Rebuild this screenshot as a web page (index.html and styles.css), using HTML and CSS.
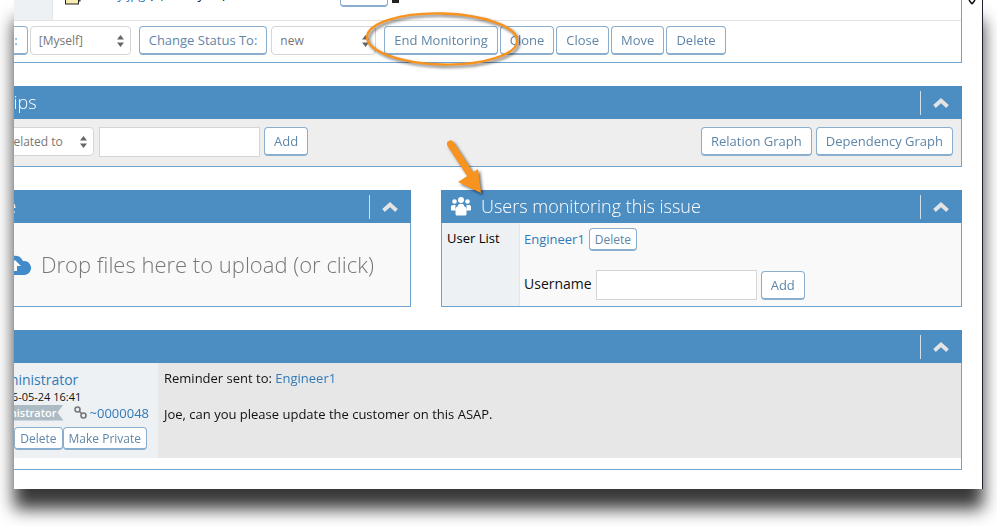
FILE: index.html
```html
<!DOCTYPE html>
<html lang="en">
<head>
  <meta charset="UTF-8">
  <title>View Issue</title>
  <link rel="stylesheet" href="styles.css">
</head>
<body>
  <div class="shot">
    <div class="content">

      <section class="widget">
        <div class="file-row">
          <div class="file-label"></div>
          <div class="file-info">
            <svg class="file-icon" width="16" height="14" viewBox="0 0 16 14"><rect x="3" y="0" width="12" height="10" fill="#e8d84a" stroke="#222"/><rect x="0.5" y="4" width="13" height="9" fill="#f4ecb0" stroke="#222"/></svg>
            <a href="#">Bobby.jpg</a>
            <span class="file-size">(4,321 bytes) 2016-05-24 16:41</span>
            <button class="btn btn-file">Delete</button>
            <span class="file-mark"></span>
          </div>
        </div>
        <div class="actions">
          <button class="btn">Assign To:</button>
          <div class="select select-user">[Myself]
            <svg width="7" height="12" viewBox="0 0 7 12"><path d="M3.500 0 7 4.500H0zM3.500 12 0 7.500h7z" fill="#666"/></svg>
          </div>
          <button class="btn btn-status">Change Status To:</button>
          <div class="select select-status">new
            <svg width="7" height="12" viewBox="0 0 7 12"><path d="M3.500 0 7 4.500H0zM3.500 12 0 7.500h7z" fill="#666"/></svg>
          </div>
          <button class="btn btn-monitor">End Monitoring</button>
          <button class="btn">Clone</button>
          <button class="btn">Close</button>
          <button class="btn">Move</button>
          <button class="btn">Delete</button>
        </div>
      </section>

      <section class="widget">
        <header class="widget-head">
          <h4 class="widget-title title-rel">Relationships</h4>
          <div class="widget-toolbar">
            <svg width="18" height="12" viewBox="0 0 18 12"><path d="M2.500 9.500 9 3.500l6.500 6" fill="none" stroke="#e4e4e4" stroke-width="3.800"/></svg>
          </div>
        </header>
        <div class="rel-body">
          <div class="rel-add">
            <div class="select select-rel">Related to
              <svg width="7" height="12" viewBox="0 0 7 12"><path d="M3.500 0 7 4.500H0zM3.500 12 0 7.500h7z" fill="#666"/></svg>
            </div>
            <input class="input input-rel" type="text">
            <button class="btn">Add</button>
          </div>
          <div class="rel-graphs">
            <button class="btn">Relation Graph</button>
            <button class="btn">Dependency Graph</button>
          </div>
        </div>
      </section>

      <div class="two-up">
        <section class="widget widget-upload">
          <header class="widget-head">
            <h4 class="widget-title title-upload">Upload File</h4>
            <div class="widget-toolbar">
              <svg width="18" height="12" viewBox="0 0 18 12"><path d="M2.500 9.500 9 3.500l6.500 6" fill="none" stroke="#e4e4e4" stroke-width="3.800"/></svg>
            </div>
          </header>
          <div class="drop">
            <svg class="drop-icon" width="32" height="20" viewBox="0 0 32 20"><path d="M7 20a6 6 0 0 1-1-12 9 9 0 0 1 17-2 7 7 0 0 1 2 14z" fill="#428bca"/><path d="M15 5l6 6h-4v5h-4v-5H9z" fill="#f9f9f9"/></svg>
            <span>Drop files here to upload (or click)</span>
          </div>
        </section>

        <section class="widget widget-monitor">
          <header class="widget-head">
            <svg class="users-icon" width="20" height="19" viewBox="0 0 20 19" fill="#fff">
              <circle cx="3.500" cy="4.500" r="2.300"/><circle cx="16.500" cy="4.500" r="2.300"/><circle cx="10" cy="3" r="3"/>
              <path d="M0 13V9.500Q0 8 2 8h2.500Q4 12 5 13.500H1Q0 13.500 0 13zM20 13V9.500Q20 8 18 8h-2.500Q16 12 15 13.500h4Q20 13.500 20 13z"/>
              <circle cx="10" cy="10" r="3.300"/>
              <path d="M4.500 17V12.500Q4.500 9.500 7 9.500h6q2.500 0 2.500 3V17q0 1.500-1.500 1.500H6Q4.500 18.500 4.500 17z"/>
            </svg>
            <h4 class="widget-title">Users monitoring this issue</h4>
            <div class="widget-toolbar">
              <svg width="18" height="12" viewBox="0 0 18 12"><path d="M2.500 9.500 9 3.500l6.500 6" fill="none" stroke="#e4e4e4" stroke-width="3.800"/></svg>
            </div>
          </header>
          <div class="monitor-body">
            <div class="monitor-label">User List</div>
            <div class="monitor-main">
              <div class="monitor-user">
                <a href="#">Engineer1</a>
                <button class="btn btn-small">Delete</button>
              </div>
              <div class="monitor-add">
                <label>Username</label>
                <input class="input input-user" type="text">
                <button class="btn btn-add">Add</button>
              </div>
            </div>
          </div>
        </section>
      </div>

      <section class="widget">
        <header class="widget-head">
          <h4 class="widget-title title-rel">Activities</h4>
          <div class="widget-toolbar">
            <svg width="18" height="12" viewBox="0 0 18 12"><path d="M2.500 9.500 9 3.500l6.500 6" fill="none" stroke="#e4e4e4" stroke-width="3.800"/></svg>
          </div>
        </header>
        <div class="note">
          <div class="note-meta">
            <a class="note-author" href="#">Administrator</a>
            <div class="note-date">2016-05-24 16:41</div>
            <div class="note-tags">
              <span class="note-role">administrator</span>
              <svg class="note-link-icon" width="13" height="13" viewBox="0 0 13 13" fill="none" stroke="#777" stroke-width="1.600"><circle cx="3.500" cy="3.500" r="2.500"/><circle cx="9.500" cy="9.500" r="2.500"/><path d="M5 5l3 3"/></svg>
              <a href="#">~0000048</a>
            </div>
            <div class="note-actions">
              <button class="btn btn-small">Delete</button>
              <button class="btn btn-small">Make Private</button>
            </div>
          </div>
          <div class="note-text">
            <p>Reminder sent to: <a href="#">Engineer1</a></p>
            <p>Joe, can you please update the customer on this ASAP.</p>
          </div>
        </div>
      </section>

    </div>
  </div>

  <svg class="markup" width="997" height="526" viewBox="0 0 997 526">
    <g class="markup-ring">
      <ellipse cx="442" cy="39" rx="75" ry="25.500" transform="rotate(1.500 442 39)" fill="none" stroke="#f7931e" stroke-width="2.400"/>
    </g>
    <g class="markup-arrow">
      <path d="M450.500 144 472 177" fill="none" stroke="#f7931e" stroke-width="7" stroke-linecap="round"/>
      <path d="M458 182 478 169 481 193z" fill="#f7931e"/>
    </g>
    <path d="M969 0l3 4M975 0l-3 4" stroke="#111" stroke-width="1.500"/>
  </svg>
</body>
</html>
```

FILE: styles.css
```css
body {
  margin: 0;
  height: 526px;
  overflow: hidden;
  background-color: #fff;
  color: #111;
  font-family: "Open Sans", sans-serif;
  font-size: 13px;
}

a {
  color: #337ab7;
  text-decoration: none;
}

.shot {
  width: 968px;
  height: 489px;
  margin-left: 14px;
  background-color: #fff;
  border-right: 1px solid #1c2230;
  box-shadow: 0 20px 16px rgba(0, 0, 0, 0.78);
  overflow: hidden;
  filter: blur(0.35px);
}

.content {
  display: flex;
  flex-direction: column;
  gap: 23px;
  width: 988px;
  margin-top: -1px;
  margin-left: -40px;
}

.widget {
  border: 1px solid #6fa3cf;
  background-color: #fff;
}

.widget-head {
  display: flex;
  align-items: center;
  height: 33px;
  background-color: #4c8dc2;
  color: #fff;
  margin: -1px -1px 0;
  padding: 0 1px;
}

.widget-title {
  flex: 1;
  margin: 0;
  padding-bottom: 2px;
  font-size: 18px;
  font-weight: 300;
  white-space: nowrap;
}

.title-rel {
  margin-left: -46px;
}

.title-upload {
  margin-left: -49px;
}

.widget-toolbar {
  display: flex;
  align-items: center;
  justify-content: center;
  width: 40px;
  height: 24px;
  border-left: 1px solid #cfe0ee;
}

/* buttons and inputs */
.btn {
  height: 29px;
  padding: 0 9px;
  background-color: #fff;
  border: 1px solid #8aafce;
  border-bottom-width: 2px;
  border-radius: 4px;
  color: #5f86a8;
  font-family: inherit;
  font-size: 13px;
  white-space: nowrap;
}

.btn-small {
  height: 23px;
  padding: 0 5px;
  font-size: 12px;
}

.select {
  display: flex;
  align-items: center;
  justify-content: space-between;
  box-sizing: border-box;
  height: 29px;
  padding: 0 6px 0 8px;
  background-color: #fff;
  border: 1px solid #d5d5d5;
  border-radius: 4px;
  color: #777;
  font-size: 12px;
}

.input {
  box-sizing: border-box;
  height: 30px;
  background-color: #fff;
  border: 1px solid #d5d5d5;
}

/* top issue block */
.file-row {
  display: flex;
  height: 20px;
  border-bottom: 1px solid #e2e2e2;
  overflow: hidden;
}

.file-label {
  width: 77px;
  background-color: #edf1f4;
  border-right: 1px solid #e2e6ea;
}

.file-info {
  display: flex;
  align-items: center;
  gap: 4px;
  height: 27px;
  margin-top: -20px;
  padding-left: 12px;
}

.file-info a {
  font-size: 13px;
}

.file-icon {
  align-self: flex-end;
  margin-bottom: 2px;
}

.file-size {
  width: 187px;
  white-space: nowrap;
  font-size: 13px;
}

.btn-file {
  align-self: flex-end;
  flex-shrink: 0;
  width: 48px;
  height: 22px;
  padding: 0;
  color: #fff;
}

.file-mark {
  align-self: flex-start;
  width: 7px;
  height: 23px;
  background-color: #222;
}

.actions {
  display: flex;
  gap: 2px;
  height: 36px;
  padding-top: 5px;
  margin-left: -28px;
}

.select-user {
  width: 101px;
  margin-left: 0;
}

.btn-status {
  margin-left: 6px;
}

.select-status {
  width: 105px;
  margin-left: 2px;
}

.btn-monitor {
  margin-left: 6px;
}

/* relationships */
.rel-body {
  display: flex;
  justify-content: space-between;
  height: 47px;
  padding-top: 8px;
  padding-right: 8px;
  box-sizing: border-box;
  background-color: #eee;
}

.rel-add,
.rel-graphs {
  display: flex;
  gap: 4px;
}

.select-rel {
  width: 119px;
  margin-right: 1px;
  padding-left: 30px;
}

.input-rel {
  width: 161px;
  height: 30px;
}

/* upload and monitor columns */
.two-up {
  display: flex;
  gap: 30px;
}

.widget-upload {
  width: 435px;
}

.widget-monitor {
  flex: 1;
}

.drop {
  display: flex;
  align-items: center;
  gap: 9px;
  height: 83px;
  padding-left: 25px;
  background-color: #f9f9f9;
  color: #777;
  font-size: 22px;
  font-weight: 300;
}

.drop span {
  padding-bottom: 2px;
}

.users-icon {
  margin: 0 10px 0 9px;
}

.monitor-body {
  display: flex;
  height: 83px;
}

.monitor-label {
  width: 72px;
  padding: 6px 0 0 5px;
  background-color: #edf1f4;
  border-right: 1px solid #e2e6ea;
  color: #000;
  font-weight: 500;
}

.monitor-main {
  flex: 1;
  display: flex;
  flex-direction: column;
  justify-content: space-between;
  padding: 5px 5px 6px 4px;
  background-color: #f9f9f9;
}

.monitor-user {
  display: flex;
  align-items: center;
  gap: 4px;
}

.monitor-user a {
  padding-bottom: 1px;
  font-size: 13px;
}

.monitor-add {
  display: flex;
  align-items: center;
  gap: 4px;
  font-size: 14px;
}

.monitor-add label {
  padding-bottom: 4px;
}

.input-user {
  width: 161px;
}

/* note */
.note {
  display: flex;
  height: 95px;
  margin-bottom: 11px;
  background-color: #e7e7e7;
}

.note-meta {
  width: 183px;
  box-sizing: border-box;
  padding: 8px 9px 0 11px;
  background-color: #edf1f4;
}

.note-author {
  display: block;
  margin-left: 2px;
  font-size: 14px;
  line-height: 18px;
}

.note-date {
  font-size: 11px;
  line-height: 16px;
  white-space: nowrap;
  margin-left: 7px;
}

.note-tags {
  display: flex;
  align-items: center;
  height: 17px;
  margin-top: -1px;
  font-size: 13px;
}

.note-role {
  margin-left: -7px;
  padding: 0 7px 0 4px;
  background-color: #abbac3;
  color: #fff;
  font-size: 11px;
  font-weight: 600;
  line-height: 16px;
  clip-path: polygon(0 0, 100% 0, calc(100% - 6px) 50%, 100% 100%, 0 100%);
}

.note-link-icon {
  margin-left: auto;
  margin-right: 3px;
}

.note-actions {
  display: flex;
  justify-content: flex-end;
  margin-top: 6px;
  padding-right: 2px;
}

.note-text {
  flex: 1;
  padding: 6px 6px 0;
  color: #111;
}

.note-text p {
  margin: 0 0 18px;
  line-height: 18px;
}

/* annotations drawn over the screenshot */
.markup {
  position: absolute;
  top: 0;
  left: 0;
  pointer-events: none;
}

.markup-ring,
.markup-arrow {
  filter: drop-shadow(2px 2px 1.500px rgba(0, 0, 0, 0.55));
}
```
